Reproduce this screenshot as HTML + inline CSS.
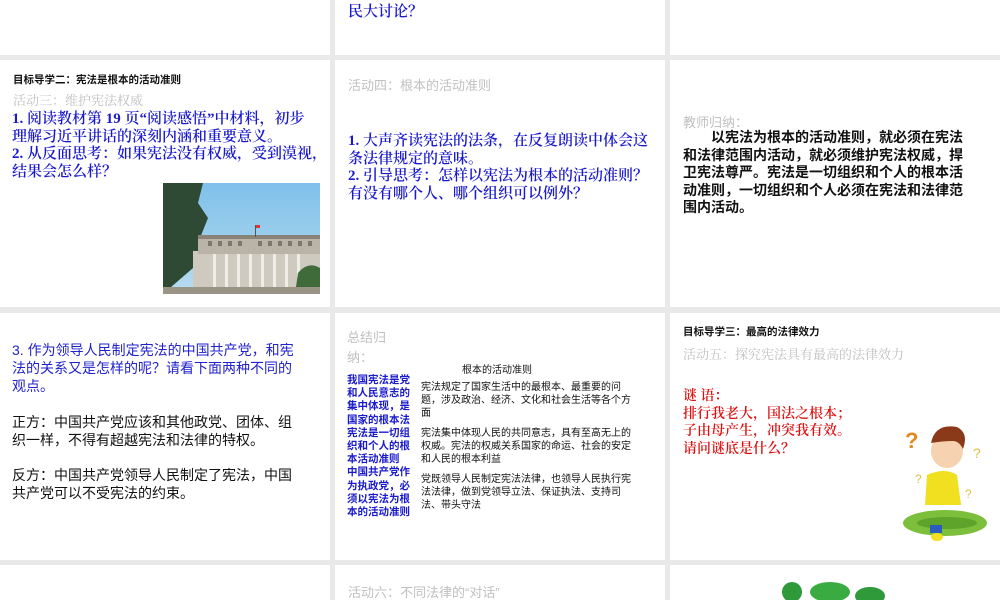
<!DOCTYPE html>
<html><head><meta charset="utf-8"><style>
*{margin:0;padding:0;box-sizing:border-box}
body{width:1000px;height:600px;background:#e9e9e9;position:relative;overflow:hidden;font-family:"Liberation Sans","Noto Sans CJK SC",sans-serif}
.s{position:absolute;background:#fff;overflow:hidden}
.a{position:absolute;white-space:nowrap}
.blue{color:#1a1acc;font-family:"Liberation Serif","Noto Serif CJK SC",serif;font-weight:600;font-size:15px;line-height:17.5px}
.gray{color:#c0c0c0;font-family:"Liberation Serif","Noto Serif CJK SC",serif;font-size:13px}
.gs{color:#c0c0c0;font-size:13px}
.h{font-weight:bold;font-size:10.5px;color:#111}
.blk{color:#111;font-weight:bold;font-size:14px;line-height:17.5px}
</style></head><body>
<div class="s" style="left:0;top:0;width:330px;height:55px"></div>
<div class="s" style="left:335px;top:0;width:330px;height:55px">
<div class="a blue" style="left:13px;top:4px">民大讨论？</div></div>
<div class="s" style="left:670px;top:0;width:330px;height:55px"></div>

<div class="s" style="left:0;top:60px;width:330px;height:247px">
<div class="a h" style="left:13px;top:12px">目标导学二：宪法是根本的活动准则</div>
<div class="a gray" style="left:13px;top:30px">活动三：维护宪法权威</div>
<div class="a blue" style="left:12px;top:51px">1. 阅读教材第 19 页“阅读感悟”中材料，初步<br>理解习近平讲话的深刻内涵和重要意义。<br>2. 从反面思考：如果宪法没有权威，受到漠视，<br>结果会怎么样？</div>
<svg style="position:absolute;left:163px;top:123px" width="157" height="111" viewBox="0 0 157 111">
<defs><linearGradient id="sk" x1="0" y1="0" x2="0" y2="1"><stop offset="0" stop-color="#7fc0ea"/><stop offset="1" stop-color="#b8dcf0"/></linearGradient></defs>
<rect width="157" height="111" fill="url(#sk)"/>
<path d="M0 0h40l-5 20 10 15-8 20 5 20-12 10-30 26z" fill="#2e4a35"/>
<rect x="30" y="68" width="127" height="43" fill="#cfcabf"/>
<rect x="35" y="55" width="122" height="16" fill="#b9b3a8"/>
<rect x="35" y="52" width="122" height="4" fill="#8a8478"/>
<g fill="#7e786c"><rect x="45" y="58" width="4" height="5"/><rect x="55" y="58" width="4" height="5"/><rect x="65" y="58" width="4" height="5"/><rect x="75" y="58" width="4" height="5"/><rect x="95" y="58" width="4" height="5"/><rect x="105" y="58" width="4" height="5"/><rect x="115" y="58" width="4" height="5"/><rect x="125" y="58" width="4" height="5"/><rect x="135" y="58" width="4" height="5"/><rect x="145" y="58" width="4" height="5"/></g>
<g fill="#f0ede6"><rect x="50" y="71" width="3" height="36"/><rect x="62" y="71" width="3" height="36"/><rect x="74" y="71" width="3" height="36"/><rect x="86" y="71" width="3" height="36"/><rect x="98" y="71" width="3" height="36"/><rect x="110" y="71" width="3" height="36"/><rect x="122" y="71" width="3" height="36"/><rect x="134" y="71" width="3" height="36"/></g>
<rect x="92" y="42" width="1" height="12" fill="#555"/><rect x="93" y="42" width="4" height="3" fill="#d33"/>
<path d="M135 90q10-12 22-5v26h-25z" fill="#3f6a3a"/>
<rect x="0" y="104" width="157" height="7" fill="#9a9486"/>
</svg></div>

<div class="s" style="left:335px;top:60px;width:330px;height:247px">
<div class="a gs" style="left:13px;top:15px">活动四：根本的活动准则</div>
<div class="a blue" style="left:13px;top:73px">1. 大声齐读宪法的法条，在反复朗读中体会这<br>条法律规定的意味。<br>2. 引导思考：怎样以宪法为根本的活动准则？<br>有没有哪个人、哪个组织可以例外？</div></div>

<div class="s" style="left:670px;top:60px;width:330px;height:247px">
<div class="a gs" style="left:13px;top:52px">教师归纳：</div>
<div class="a blk" style="left:13px;top:69px">　　以宪法为根本的活动准则，就必须在宪法<br>和法律范围内活动，就必须维护宪法权威，捍<br>卫宪法尊严。宪法是一切组织和个人的根本活<br>动准则，一切组织和个人必须在宪法和法律范<br>围内活动。</div></div>

<div class="s" style="left:0;top:313px;width:330px;height:247px">
<div class="a" style="left:12px;top:28px;color:#2222cc;font-size:14px;line-height:18px">3. 作为领导人民制定宪法的中国共产党，和宪<br>法的关系又是怎样的呢？请看下面两种不同的<br>观点。</div>
<div class="a" style="left:12px;top:100px;color:#111;font-size:14px;line-height:18px">正方：中国共产党应该和其他政党、团体、组<br>织一样，不得有超越宪法和法律的特权。</div>
<div class="a" style="left:12px;top:153px;color:#111;font-size:14px;line-height:18px">反方：中国共产党领导人民制定了宪法，中国<br>共产党可以不受宪法的约束。</div></div>

<div class="s" style="left:335px;top:313px;width:330px;height:247px">
<div class="a gs" style="left:12px;top:15px;line-height:20px">总结归<br>纳：</div>
<div class="a" style="left:127px;top:48px;font-size:10px;color:#111">根本的活动准则</div>
<div class="a" style="left:12px;top:61px;font-size:10.5px;line-height:13.2px;color:#1a1acc;font-weight:bold">我国宪法是党<br>和人民意志的<br>集中体现，是<br>国家的根本法<br>宪法是一切组<br>织和个人的根<br>本活动准则<br>中国共产党作<br>为执政党，必<br>须以宪法为根<br>本的活动准则</div>
<div class="a" style="left:86px;top:68px;font-size:10px;line-height:13px;color:#111">宪法规定了国家生活中的最根本、最重要的问<br>题，涉及政治、经济、文化和社会生活等各个方<br>面</div>
<div class="a" style="left:86px;top:114px;font-size:10px;line-height:13px;color:#111">宪法集中体现人民的共同意志，具有至高无上的<br>权威。宪法的权威关系国家的命运、社会的安定<br>和人民的根本利益</div>
<div class="a" style="left:86px;top:160px;font-size:10px;line-height:13px;color:#111">党既领导人民制定宪法法律，也领导人民执行宪<br>法法律，做到党领导立法、保证执法、支持司<br>法、带头守法</div></div>

<div class="s" style="left:670px;top:313px;width:330px;height:247px">
<div class="a h" style="left:13px;top:11px">目标导学三：最高的法律效力</div>
<div class="a gray" style="left:13px;top:31px">活动五：探究宪法具有最高的法律效力</div>
<div class="a" style="left:13px;top:75px;color:#dd1111;font-weight:600;font-size:14px;line-height:17.5px;font-family:'Liberation Serif','Noto Serif CJK SC',serif">谜  语：<br>排行我老大，国法之根本；<br>子由母产生，冲突我有效。<br>请问谜底是什么？</div>
<svg style="position:absolute;left:225px;top:100px" width="100" height="135" viewBox="0 0 100 135">
<text x="10" y="35" font-size="22" fill="#e08a20" font-weight="bold" font-family="Liberation Sans">?</text>
<text x="20" y="70" font-size="12" fill="#e0c040" font-family="Liberation Sans">?</text>
<text x="78" y="45" font-size="14" fill="#e0c040" font-family="Liberation Sans">?</text>
<text x="70" y="85" font-size="12" fill="#e0c040" font-family="Liberation Sans">?</text>
<ellipse cx="50" cy="110" rx="42" ry="13" fill="#7cbf3c"/>
<ellipse cx="52" cy="110" rx="30" ry="6" fill="#5ea32a"/>
<path d="M32 62q18-8 30 0l4 30h-36z" fill="#f0e020"/>
<ellipse cx="52" cy="38" rx="16" ry="17" fill="#f6d2b0"/>
<path d="M36 30q4-20 26-16q12 6 6 22q-4-8-10-8q-10 0-22 2z" fill="#8a3a18"/>
<rect x="35" y="112" width="12" height="8" fill="#2a5cc0"/>
<ellipse cx="42" cy="124" rx="6" ry="4" fill="#f0e020"/>
</svg></div>

<div class="s" style="left:0;top:565px;width:330px;height:35px"></div>
<div class="s" style="left:335px;top:565px;width:330px;height:35px">
<div class="a gs" style="left:13px;top:17px">活动六：不同法律的“对话”</div></div>
<div class="s" style="left:670px;top:565px;width:330px;height:35px">
<svg style="position:absolute;left:105px;top:15px" width="140" height="20"><ellipse cx="17" cy="12" rx="10" ry="10" fill="#2e9a3a"/><ellipse cx="55" cy="12" rx="20" ry="10" fill="#3aab40"/><ellipse cx="95" cy="16" rx="15" ry="9" fill="#2e9a3a"/></svg></div>
</body></html>
